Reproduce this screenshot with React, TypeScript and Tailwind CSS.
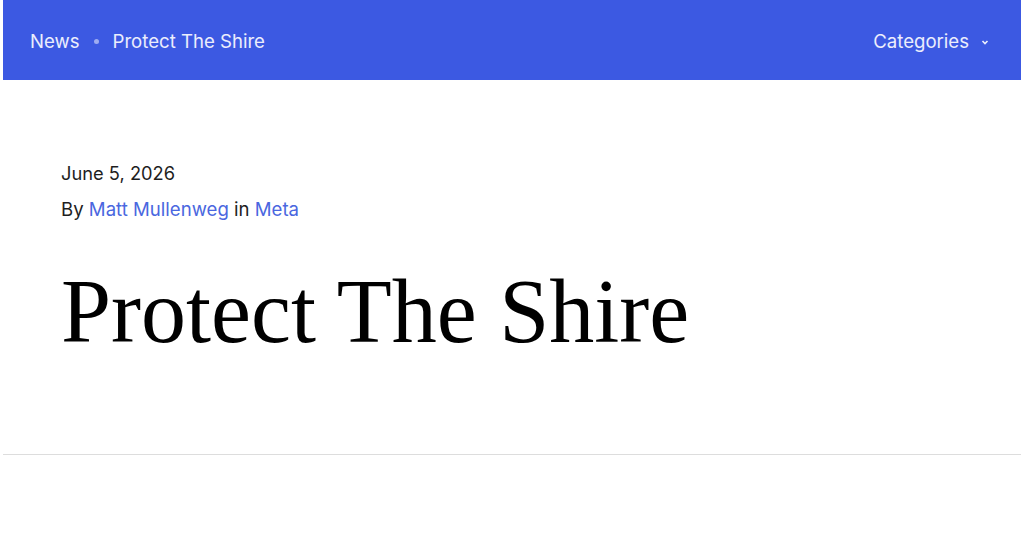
import React from "react";

export default function App() {
  return (
    <div className="min-h-[536px] bg-white px-[3px] font-['Inter',sans-serif]">
      <header className="flex h-[80px] items-center justify-between bg-[#3c59e2] pl-[27px] pr-[31px] text-[18.6px] text-white/90">
        <nav className="flex items-center pt-[4px]">
          <span>News</span>
          <span className="mx-[14px] h-[5px] w-[5px] rounded-full bg-white/50" />
          <span>Protect The Shire</span>
        </nav>
        <div className="flex items-center gap-[11px] pt-[4px]">
          <span>Categories</span>
          <svg width="10" height="10" viewBox="0 0 10 10" fill="none" stroke="currentColor" strokeWidth="1.6">
            <path d="M2.5 4 L5 6.5 L7.5 4" />
          </svg>
        </div>
      </header>
      <main className="px-[58px] pt-[80px] pb-[92px] border-b border-[#dddddd]">
        <p className="text-[18.3px] leading-[26px] text-[#1e1e1e]">June 5, 2026</p>
        <p className="mt-[10px] text-[18.6px] leading-[26px] text-[#1e1e1e]">
          By <span className="text-[#4a67e0]">Matt Mullenweg</span> in{" "}
          <span className="text-[#4a67e0]">Meta</span>
        </p>
        <h1 className="mt-[40px] font-['Liberation_Serif',serif] text-[90px] leading-[100px] text-black">
          Protect The Shire
        </h1>
      </main>
    </div>
  );
}
